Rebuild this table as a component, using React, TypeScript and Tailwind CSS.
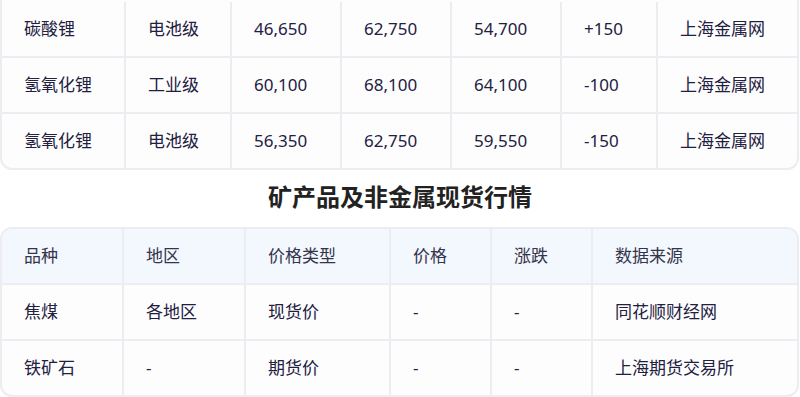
import React from "react";

const font = { fontFamily: '"Noto Sans", "Noto Sans CJK SC", sans-serif' };

const topCols = "grid-cols-[124px_106px_110px_110px_110px_96px_1fr]";
const bottomCols = "grid-cols-[122px_122px_145px_101px_101px_1fr]";

const lithium = [
  ["碳酸锂", "电池级", "46,650", "62,750", "54,700", "+150", "上海金属网"],
  ["氢氧化锂", "工业级", "60,100", "68,100", "64,100", "-100", "上海金属网"],
  ["氢氧化锂", "电池级", "56,350", "62,750", "59,550", "-150", "上海金属网"],
];

const minerals = [
  ["焦煤", "各地区", "现货价", "-", "-", "同花顺财经网"],
  ["铁矿石", "-", "期货价", "-", "-", "上海期货交易所"],
];

const headers = ["品种", "地区", "价格类型", "价格", "涨跌", "数据来源"];

function Cell({ children, last }: { children: React.ReactNode; last?: boolean }) {
  return (
    <div
      className={`flex h-[54px] items-center px-[22px] text-[17px] text-[#23203f] ${
        last ? "" : "border-r-2 border-[#ececf1]"
      }`}
    >
      {children}
    </div>
  );
}

export default function App() {
  return (
    <div className="min-h-screen w-[800px] bg-white" style={font}>
      {/* lithium table (header scrolled off) */}
      <div className="w-[799px] overflow-hidden rounded-b-xl border-2 border-t-0 border-[#ececf1] bg-[#fdfdfe]">
        {lithium.map((row, i) => (
          <div
            key={i}
            className={`grid ${topCols} ${i === 0 ? "pt-[2px]" : ""} ${
              i < lithium.length - 1 ? "border-b-2 border-[#ececf1]" : ""
            }`}
          >
            {row.map((c, j) => (
              <Cell key={j} last={j === row.length - 1}>
                {c}
              </Cell>
            ))}
          </div>
        ))}
      </div>

      <h2 className="mb-[14px] mt-[11px] text-center text-2xl leading-8 font-bold text-[#222]">
        矿产品及非金属现货行情
      </h2>

      <div className="w-[799px] overflow-hidden rounded-xl border-2 border-[#ececf1] bg-[#fdfdfe]">
        <div className={`grid ${bottomCols} border-b-2 border-[#ececf1] bg-[#f3f7fe]`}>
          {headers.map((h, j) => (
            <Cell key={j} last={j === headers.length - 1}>
              <span className="text-[#34344a]">{h}</span>
            </Cell>
          ))}
        </div>
        {minerals.map((row, i) => (
          <div
            key={i}
            className={`grid ${bottomCols} ${i < minerals.length - 1 ? "border-b-2 border-[#ececf1]" : ""}`}
          >
            {row.map((c, j) => (
              <Cell key={j} last={j === row.length - 1}>
                {c}
              </Cell>
            ))}
          </div>
        ))}
      </div>
    </div>
  );
}
